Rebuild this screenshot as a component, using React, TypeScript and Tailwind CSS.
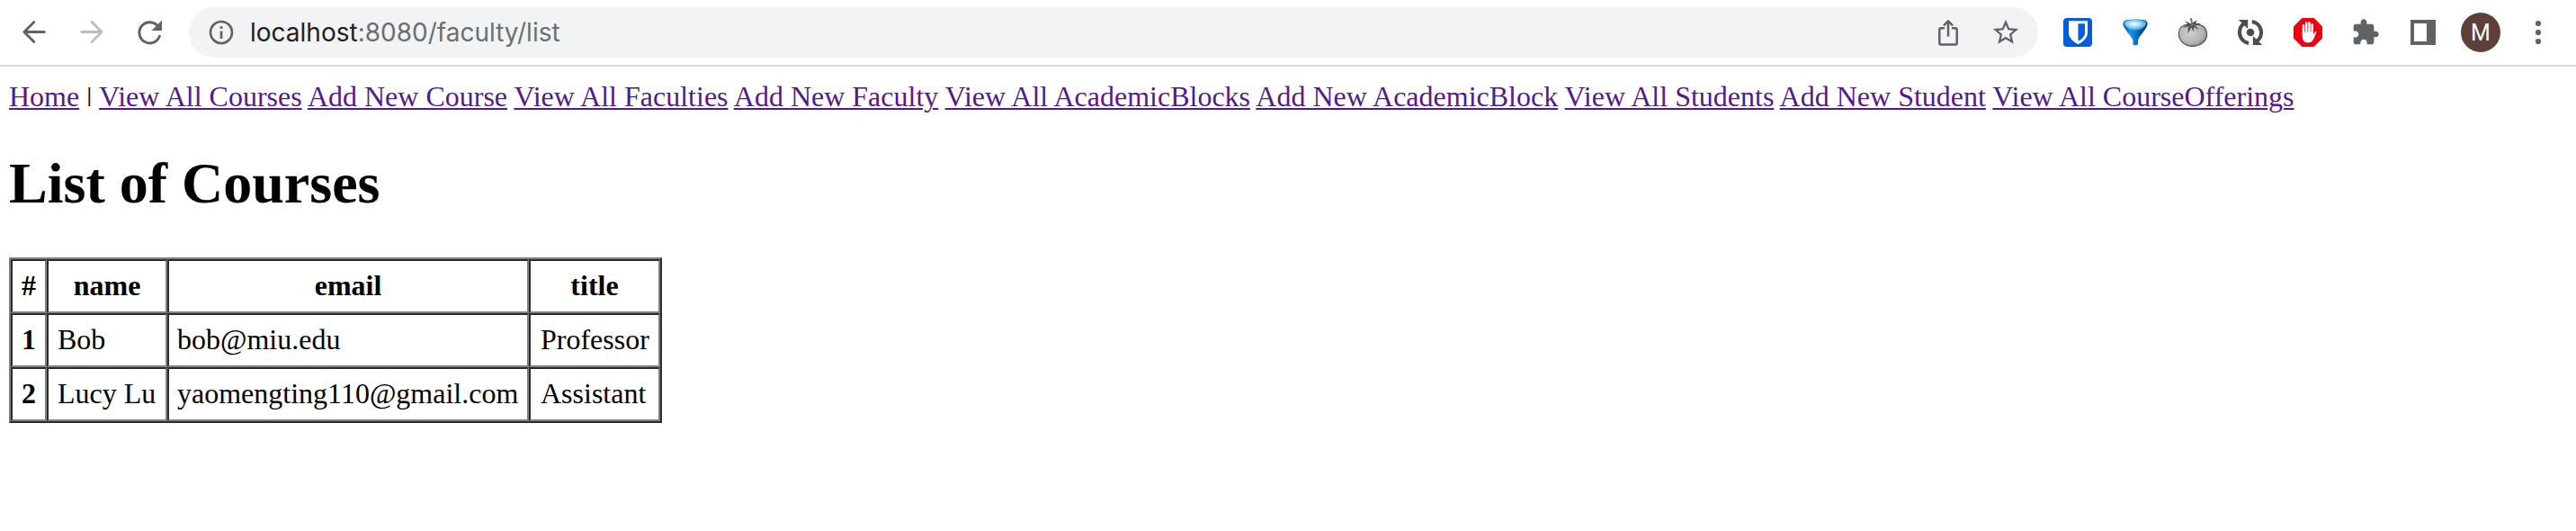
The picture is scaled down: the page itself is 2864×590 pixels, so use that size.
import type { ReactNode } from 'react';

const links = [
  'View All Courses',
  'Add New Course',
  'View All Faculties',
  'Add New Faculty',
  'View All AcademicBlocks',
  'Add New AcademicBlock',
  'View All Students',
  'Add New Student',
  'View All CourseOfferings',
];

const rows = [
  { name: 'Bob', email: 'bob@miu.edu', title: 'Professor' },
  { name: 'Lucy Lu', email: 'yaomengting110@gmail.com', title: 'Assistant' },
];

const link = 'text-[#551a8b] underline decoration-2 underline-offset-2';

const cell =
  'h-[60px] whitespace-nowrap border-2 border-t-[#2c2c2c] border-l-[#2c2c2c] border-r-[#808080] border-b-[#808080] pt-0 pb-[2px]';

function Slot({ children }: { children: ReactNode }) {
  return <div className="flex h-[72px] w-16 shrink-0 items-center justify-center">{children}</div>;
}

function BackIcon({ className }: { className: string }) {
  return (
    <svg width="32" height="32" viewBox="0 0 32 32" className={className} fill="none" stroke="currentColor" strokeWidth="2.8" strokeLinecap="round" strokeLinejoin="round">
      <path d="M27.3 15.5H4.8M15.8 4.6 4.8 15.5l11 10.9" />
    </svg>
  );
}

function ForwardIcon({ className }: { className: string }) {
  return (
    <svg width="32" height="32" viewBox="0 0 32 32" className={className} fill="none" stroke="currentColor" strokeWidth="2.8" strokeLinecap="round" strokeLinejoin="round">
      <path d="M4.7 15.5H27.2M16.2 4.6 27.2 15.5l-11 10.9" />
    </svg>
  );
}

function ReloadIcon() {
  return (
    <svg width="32" height="32" viewBox="0 0 32 32" fill="none">
      <path d="M27.4 20.2A11.6 11.6 0 1 1 24.6 8" stroke="#5f6368" strokeWidth="2.9" strokeLinecap="round" />
      <path d="M30 2.6V14H18.6z" fill="#5f6368" />
    </svg>
  );
}

function InfoIcon() {
  return (
    <svg width="28" height="28" viewBox="0 0 28 28" fill="none">
      <circle cx="14" cy="14" r="12" stroke="#5f6368" strokeWidth="2.6" />
      <path d="M12.7 12.6h2.7v8.3h-2.7zM12.7 7.3h2.7V10h-2.7z" fill="#5f6368" />
    </svg>
  );
}

function ShareIcon() {
  return (
    <svg width="32" height="32" viewBox="0 0 32 32" fill="none" stroke="#5f6368" strokeWidth="2.5" strokeLinejoin="round">
      <path d="M12 11.3H8.4Q6.3 11.3 6.3 13.4V27.5Q6.3 29.6 8.4 29.6H23.6Q25.7 29.6 25.7 27.5V13.4Q25.7 11.3 23.6 11.3H20" />
      <path d="M16 20.5V4M11 8.4l5-5 5 5" />
    </svg>
  );
}

function StarIcon() {
  return (
    <svg width="34" height="34" viewBox="0 0 24 24" fill="#5f6368">
      <path d="M22 9.24l-7.19-.62L12 2 9.19 8.63 2 9.24l5.46 4.73L5.82 21 12 17.27 18.18 21l-1.63-7.03L22 9.24zM12 15.4l-3.76 2.27 1-4.28-3.32-2.88 4.38-.38L12 6.1l1.71 4.04 4.38.38-3.32 2.88 1 4.28L12 15.4z" />
    </svg>
  );
}

function ShieldIcon() {
  return (
    <svg width="32" height="32" viewBox="0 0 32 32">
      <rect width="32" height="32" rx="4" fill="#015fdd" />
      <path d="M6 3.2H27V16.5C27 22.5 21 27 16.5 29.2C12 27 6 22.5 6 16.5z" fill="#fff" />
      <path d="M16.5 6.2H24V16.5C24 20.6 20 24 16.5 25.8z" fill="#015fdd" />
    </svg>
  );
}

function FunnelIcon() {
  return (
    <svg width="32" height="32" viewBox="0 0 32 32">
      <defs>
        <linearGradient id="funnelBody" x1="0" x2="1">
          <stop offset="0" stopColor="#0a4f86" />
          <stop offset=".3" stopColor="#1593ea" />
          <stop offset=".55" stopColor="#0a70c2" />
          <stop offset="1" stopColor="#022c54" />
        </linearGradient>
        <radialGradient id="funnelTop" cx=".45" cy=".4" r=".6">
          <stop offset="0" stopColor="#ffffff" />
          <stop offset=".4" stopColor="#a9dffb" />
          <stop offset="1" stopColor="#1c9bea" />
        </radialGradient>
      </defs>
      <path d="M4.6 2.6Q16 .2 27.4 2.6Q30.6 5.6 29 9Q27 13 20.6 21.2Q19 23.6 19 25V29Q18.6 30.4 16 30.4T13.4 29V25Q13.4 23.6 11.4 21.2Q5 13 3 9Q1.4 5.6 4.6 2.6z" fill="url(#funnelBody)" />
      <path d="M5 3Q16 1 27 3Q29 5.6 27.6 8Q24 13 16 13.8Q8 13 4.4 8Q3 5.6 5 3z" fill="url(#funnelTop)" />
    </svg>
  );
}

function TomatoIcon() {
  return (
    <svg width="34" height="34" viewBox="0 0 34 34">
      <defs>
        <radialGradient id="tomato" cx=".4" cy=".4" r=".65">
          <stop offset="0" stopColor="#cecece" />
          <stop offset=".7" stopColor="#b4b4b4" />
          <stop offset="1" stopColor="#858585" />
        </radialGradient>
      </defs>
      <path d="M10 8.3C4 9.3 1.4 13.5 1.4 18.5C1.4 27 8.5 32.4 17 32.4S32.6 27 32.6 19C32.6 12 27.5 8.3 22 8.3C19 8.3 17 9.3 15.7 9.3S12.5 7.8 10 8.3z" fill="url(#tomato)" stroke="#4a4a4a" strokeWidth="1.1" />
      <path d="M15.4 7.4L14 1.6L15.8 1.2L17 6.2L22 3L20 6.8L26.8 7.6L20 9.2L23.6 14.2L18.2 11L17.6 16.3L15.2 11.2L11.4 18.4L12 10.2L5.6 12L11.2 7.4L7.4 4z" fill="#4c4c4c" />
      <path d="M15.5 3L16.8 8.5M13 11l4-3 4 3" stroke="#aaa" strokeWidth=".7" fill="none" />
    </svg>
  );
}

function SyncIcon() {
  return (
    <svg width="32" height="32" viewBox="0 0 32 32" fill="none">
      <circle cx="16" cy="16" r="4.3" fill="#4d4d4d" />
      <path d="M14.2 28A12.2 12.2 0 0 1 9.4 5.8M17.8 4A12.2 12.2 0 0 1 22.6 26.2" stroke="#4d4d4d" strokeWidth="4.2" />
      <path d="M2.8 2H13.2V12z" fill="#4d4d4d" />
      <path d="M29.2 30H18.8V20z" fill="#4d4d4d" />
    </svg>
  );
}

function StopHandIcon() {
  return (
    <svg width="32" height="32" viewBox="0 0 32 32">
      <path d="M9.4 0H22.6L32 9.4V22.6L22.6 32H9.4L0 22.6V9.4z" fill="#ed0012" />
      <g stroke="#fff" strokeLinecap="round" strokeWidth="2.5">
        <path d="M11 8.2V18M14.2 5.8V17M17.5 5.3V17M20.7 7.6V18" />
      </g>
      <path d="M9.8 15.5H22V18.6L23.4 15.8Q24.2 14.6 25.6 15.2C24.7 17.6 23 22.5 21.4 24.8C20 26.8 18.4 27.4 16 27.4C11.8 27.4 9.8 24.8 9.8 20.5z" fill="#fff" />
    </svg>
  );
}

function PuzzleIcon() {
  return (
    <svg width="32" height="32" viewBox="0 0 24 24" fill="#5f6368">
      <path d="M20.5 11H19V7c0-1.1-.9-2-2-2h-4V3.5C13 2.12 11.88 1 10.5 1S8 2.12 8 3.5V5H4c-1.1 0-1.99.9-1.99 2v3.8H3.5c1.49 0 2.7 1.21 2.7 2.7s-1.21 2.7-2.7 2.7H2V20c0 1.1.9 2 2 2h3.8v-1.5c0-1.49 1.21-2.7 2.7-2.7 1.49 0 2.7 1.21 2.7 2.7V22H17c1.1 0 2-.9 2-2v-4h1.5c1.38 0 2.5-1.12 2.5-2.5S21.88 11 20.5 11z" />
    </svg>
  );
}

function SidePanelIcon() {
  return (
    <svg width="28" height="28" viewBox="0 0 28 28">
      <path d="M0 0H28V28H0zM4 4V24H18V4z" fill="#5f6368" fillRule="evenodd" />
    </svg>
  );
}

function DotsIcon() {
  return (
    <svg width="8" height="28" viewBox="0 0 8 28" fill="#5f6368">
      <circle cx="4" cy="4" r="3.1" />
      <circle cx="4" cy="14" r="3.1" />
      <circle cx="4" cy="24" r="3.1" />
    </svg>
  );
}

export default function App() {
  return (
    <div className="h-[590px] w-[2864px] overflow-hidden bg-white">
      <header className="flex h-[74px] items-start border-b-2 border-[#dadbdc] pl-[6px]">
        <Slot><BackIcon className="text-[#5f6368]" /></Slot>
        <Slot><ForwardIcon className="text-[#babcbe]" /></Slot>
        <Slot><ReloadIcon /></Slot>
        <div className="mt-2 ml-3 flex h-14 w-[2056px] items-center rounded-full bg-[#f1f3f4] pr-1 pl-[22px]">
          <InfoIcon />
          <div className="ml-[18px] flex-1 font-['Inter',sans-serif] text-[28px] leading-9 text-[#6b6e72]">
            <span className="text-[#202124]">localhost</span>:8080/faculty/list
          </div>
          <Slot><ShareIcon /></Slot>
          <Slot><StarIcon /></Slot>
        </div>
        <div className="ml-3 flex">
          <Slot><ShieldIcon /></Slot>
          <Slot><FunnelIcon /></Slot>
          <Slot><TomatoIcon /></Slot>
          <Slot><SyncIcon /></Slot>
          <Slot><StopHandIcon /></Slot>
          <Slot><PuzzleIcon /></Slot>
          <Slot><SidePanelIcon /></Slot>
          <Slot>
            <div className="flex size-11 items-center justify-center rounded-full bg-[#5d4037] font-['Roboto',sans-serif] text-[25px] leading-none text-white">M</div>
          </Slot>
          <Slot><DotsIcon /></Slot>
        </div>
      </header>
      <main className="px-[10px] pt-[15px] font-['Liberation_Serif',serif] text-[32px] leading-9 text-black">
        <nav className="h-9 whitespace-nowrap">
          <a className={link}>Home</a>{' '}
          <span className="inline-block w-[6.4px] -translate-y-[5px] text-center text-[23px] leading-none font-bold">|</span>{' '}
          {links.map((label) => (
            <span key={label}>
              <a className={link}>{label}</a>{' '}
            </span>
          ))}
        </nav>
        <h1 className="mt-[43px] text-[64px] leading-[72px] font-bold">List of Courses</h1>
        <table className="mt-[46px] w-[726px] table-fixed border-separate border-spacing-0 border-2 border-t-[#808080] border-r-[#2c2c2c] border-b-[#2c2c2c] border-l-[#808080]">
          <colgroup>
            <col className="w-10" />
            <col className="w-[134px]" />
            <col className="w-[402px]" />
            <col className="w-[146px]" />
          </colgroup>
          <thead>
            <tr>
              {['#', 'name', 'email', 'title'].map((h) => (
                <th key={h} className={cell + ' px-[10px] text-center font-bold'}>{h}</th>
              ))}
            </tr>
          </thead>
          <tbody>
            {rows.map((r, i) => (
              <tr key={r.email}>
                <th className={cell + ' px-[10px] text-center font-bold'}>{i + 1}</th>
                <td className={cell + ' pl-[10px]'}>{r.name}</td>
                <td className={cell + ' pl-[9px]'}>{r.email}</td>
                <td className={cell + ' pl-[11px]'}>{r.title}</td>
              </tr>
            ))}
          </tbody>
        </table>
      </main>
    </div>
  );
}
